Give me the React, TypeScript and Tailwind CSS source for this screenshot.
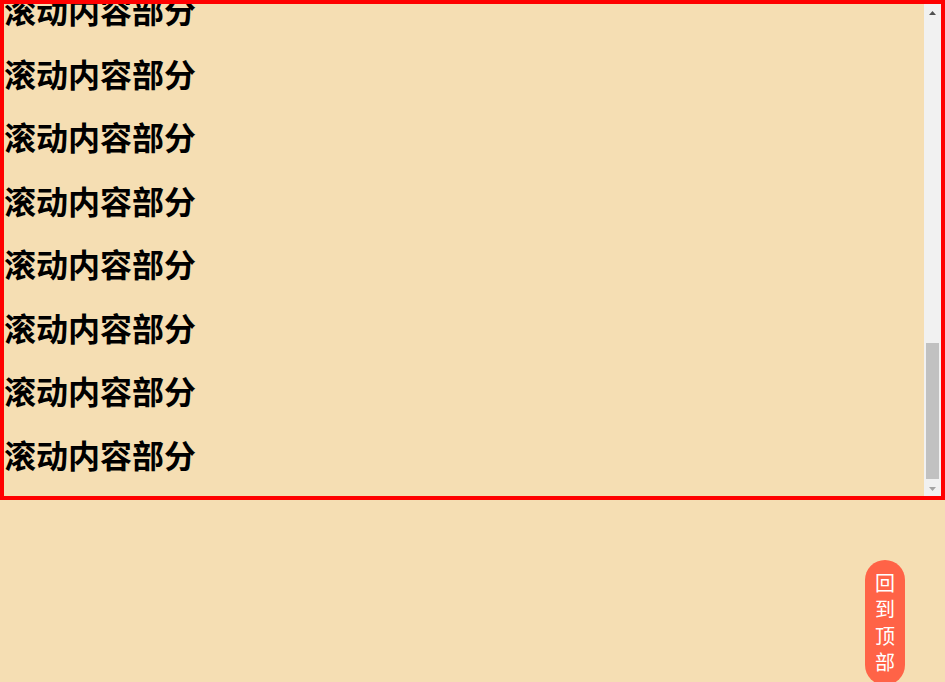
import React, { useEffect, useRef } from "react";

export default function App() {
  const ref = useRef<HTMLDivElement>(null);
  useEffect(() => {
    const el = ref.current;
    if (el) el.scrollTop = el.scrollHeight;
  }, []);
  const items = Array.from({ length: 25 }, (_, i) => i);
  return (
    <div className="min-h-screen bg-[#f5deb3] font-['Noto_Sans_CJK_SC',sans-serif]">
      <div className="flex h-[500px] w-full border-4 border-[#ff0000]">
        <div ref={ref} className="min-w-0 flex-1 overflow-hidden">
          <div className="flex flex-col gap-[21.5px] pt-[21.5px] pb-[21px]">
            {items.map((i) => (
              <h1
                key={i}
                className="m-0 text-[32px] font-bold leading-[42px] text-black"
              >
                滚动内容部分
              </h1>
            ))}
          </div>
        </div>
        <div className="flex w-[17px] shrink-0 flex-col bg-[#f1f1f1]">
          <div className="flex h-[17px] items-start justify-center pt-[7px]">
            <svg width="7" height="4" viewBox="0 0 7 4">
              <polygon points="3.5,0 7,4 0,4" fill="#505050" />
            </svg>
          </div>
          <div className="flex flex-1 flex-col justify-end px-[2px]">
            <div className="h-[136px] bg-[#c1c1c1]" />
          </div>
          <div className="flex h-[17px] items-start justify-center pt-[8px]">
            <svg width="7" height="4" viewBox="0 0 7 4">
              <polygon points="0,0 7,0 3.5,4" fill="#a3a3a3" />
            </svg>
          </div>
        </div>
      </div>
      <button className="fixed top-[560px] right-[40px] w-[40px] rounded-[20px] bg-[#ff6347] py-[10px] text-[20px] leading-[26.3px] text-white">
        回<br />到<br />顶<br />部
      </button>
    </div>
  );
}
